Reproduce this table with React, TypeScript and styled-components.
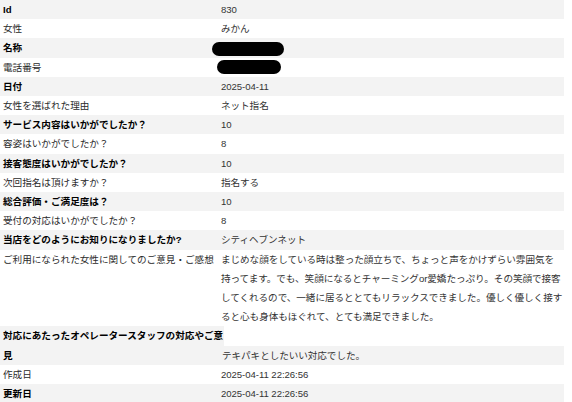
import { FC } from 'react';

import styled, { createGlobalStyle } from 'styled-components';

const GlobalStyle = createGlobalStyle`
  html, body {
    margin: 0;
    padding: 0;
    background: #ffffff;
  }
  body {
    font-family: 'Liberation Sans', Arial, 'Noto Sans CJK JP', sans-serif;
    font-size: 9.6px;
    color: #222222;
  }
`;

const Sheet = styled.div`
  width: 564px;
  display: flex;
  flex-direction: column;
`;

const Row = styled.div<{ $bottom?: boolean }>`
  display: flex;
  align-items: ${(p) => (p.$bottom ? 'flex-end' : 'stretch')};
`;

const Label = styled.div<{ $shaded: boolean; $wide?: boolean }>`
  flex: 0 0 auto;
  box-sizing: border-box;
  width: ${(p) => (p.$wide ? '224px' : '218px')};
  padding-left: 3px;
  line-height: 19.2px;
  font-weight: ${(p) => (p.$shaded ? 700 : 400)};
  color: ${(p) => (p.$shaded ? '#000000' : '#2a2a2a')};
  background: ${(p) => (p.$shaded ? '#f3f3f3' : 'transparent')};
`;

const Value = styled.div<{ $shaded: boolean; $pull?: boolean }>`
  flex: 1 1 auto;
  min-width: 0;
  padding-left: 3px;
  margin-left: ${(p) => (p.$pull ? '-5px' : '0')};
  line-height: 19.2px;
  line-break: strict;
  letter-spacing: -0.06px;
  color: #333333;
  background: ${(p) => (p.$shaded ? '#f3f3f3' : 'transparent')};
`;

const Redacted = styled.span<{ $width: number; $shift: number; $lift: number }>`
  display: inline-block;
  vertical-align: middle;
  width: ${(p) => p.$width}px;
  height: 14px;
  border-radius: 7px;
  background: #000000;
  margin-left: ${(p) => p.$shift}px;
  position: relative;
  top: ${(p) => p.$lift}px;
`;

type Field = {
  label: string;
  value: React.ReactNode;
  wide?: boolean;
};

const fields: Field[] = [
  { label: 'Id', value: '830' },
  { label: '女性', value: 'みかん' },
  { label: '名称', value: <Redacted $width={72} $shift={-9} $lift={0} /> },
  { label: '電話番号', value: <Redacted $width={64} $shift={-4} $lift={-1} /> },
  { label: '日付', value: '2025-04-11' },
  { label: '女性を選ばれた理由', value: 'ネット指名' },
  { label: 'サービス内容はいかがでしたか？', value: '10' },
  { label: '容姿はいかがでしたか？', value: '8' },
  { label: '接客態度はいかがでしたか？', value: '10' },
  { label: '次回指名は頂けますか？', value: '指名する' },
  { label: '総合評価・ご満足度は？', value: '10' },
  { label: '受付の対応はいかがでしたか？', value: '8' },
  { label: '当店をどのようにお知りになりましたか?', value: 'シティヘブンネット' },
  {
    label: 'ご利用になられた女性に関してのご意見・ご感想',
    value:
      'まじめな顔をしている時は整った顔立ちで、ちょっと声をかけずらい雰囲気を持ってます。でも、笑顔になるとチャーミングor愛嬌たっぷり。その笑顔で接客してくれるので、一緒に居るととてもリラックスできました。優しく優しく接すると心も身体もほぐれて、とても満足できました。',
  },
  {
    label: '対応にあたったオペレータースタッフの対応やご意見',
    value: 'テキパキとしたいい対応でした。',
    wide: true,
  },
  { label: '作成日', value: '2025-04-11 22:26:56' },
  { label: '更新日', value: '2025-04-11 22:26:56' },
];

const App: FC = () => {
  return (
    <>
      <GlobalStyle />
      <Sheet lang="ja">
        {fields.map((field, i) => {
          const shaded = i % 2 === 0;
          return (
            <Row key={field.label} $bottom={field.wide}>
              <Label $shaded={shaded} $wide={field.wide}>
                {field.label}
              </Label>
              <Value $shaded={shaded} $pull={field.wide}>
                {field.value}
              </Value>
            </Row>
          );
        })}
      </Sheet>
    </>
  );
};

export default App;
